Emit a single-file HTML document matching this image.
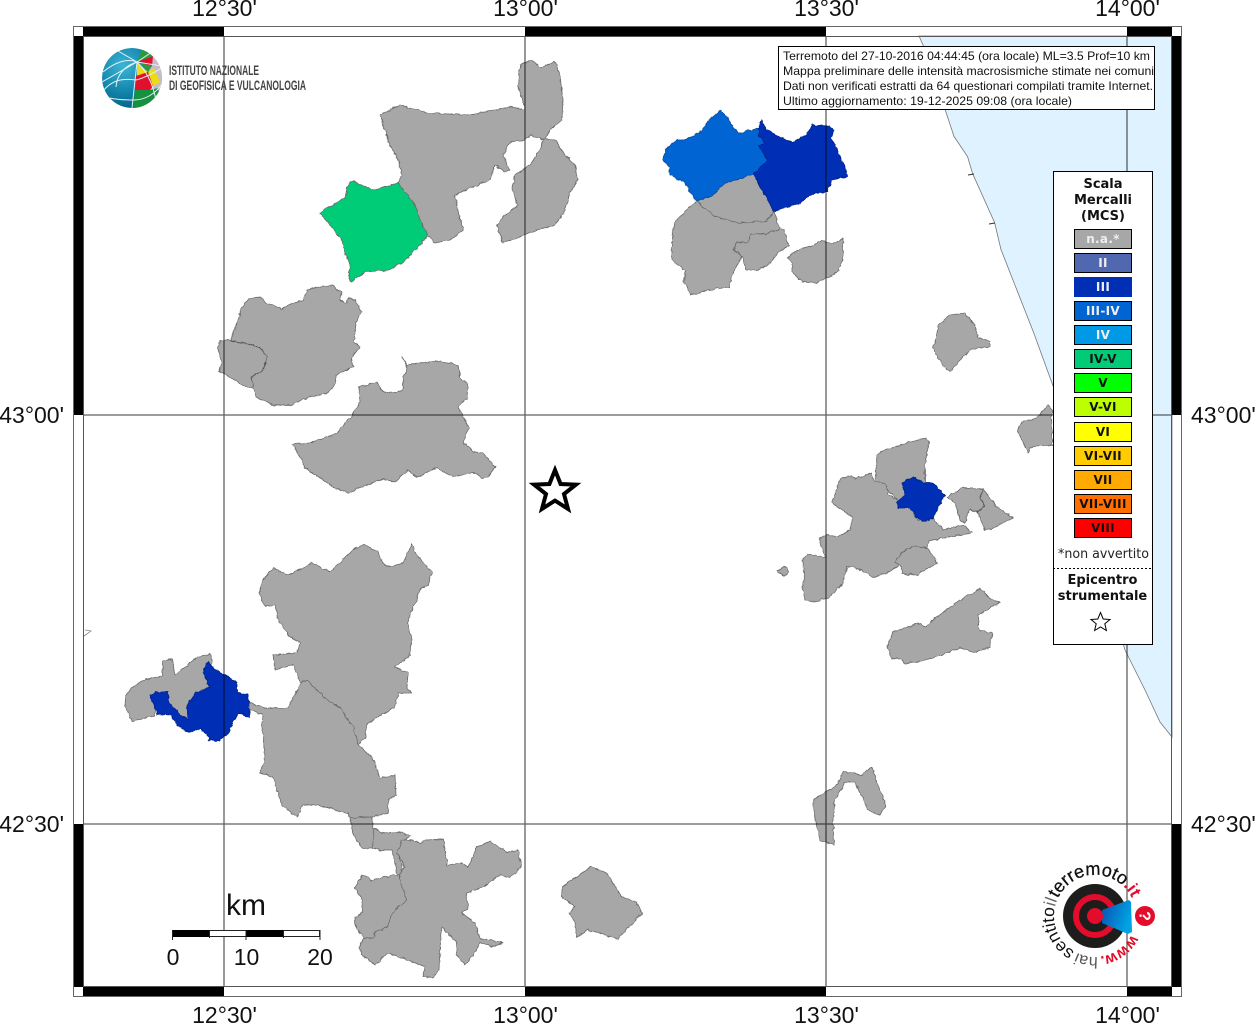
<!DOCTYPE html>
<html lang="it"><head><meta charset="utf-8"><title>Mappa intensità macrosismiche</title>
<style>html,body{margin:0;padding:0;background:#fff;width:1255px;height:1024px;overflow:hidden}svg{display:block}
text{font-family:"Liberation Sans",sans-serif}
.l{font-size:23px;fill:#111}
.c{text-anchor:middle}
.d{font-family:"DejaVu Sans",sans-serif;font-weight:bold;text-anchor:middle;font-size:13px;fill:#111}
.s{font-family:"DejaVu Sans",sans-serif;font-weight:bold;text-anchor:middle;font-size:12px;letter-spacing:.3px}
.i{font-size:12px;fill:#111}
.g polygon{fill:#a7a7a7;stroke:#6a6a6a;stroke-width:.8;stroke-linejoin:round}
.g polyline{fill:none;stroke:#555;stroke-width:1}
</style></head><body>
<svg width="1255" height="1024" viewBox="0 0 1255 1024" xmlns="http://www.w3.org/2000/svg">
<defs>
<radialGradient id="gb" cx=".35" cy=".3" r=".8"><stop offset="0" stop-color="#3db5d6"/><stop offset=".6" stop-color="#0f7fa6"/><stop offset="1" stop-color="#06597c"/></radialGradient>
<linearGradient id="cone" x1="0" y1="0" x2="1" y2=".4"><stop offset="0" stop-color="#0a4fb0"/><stop offset="1" stop-color="#00a4e4"/></linearGradient>
<clipPath id="gc"><circle cx="132" cy="78" r="30"/></clipPath>
<clipPath id="ib"><rect x="779" y="47" width="375" height="62"/></clipPath>
<path id="ring" d="M1131.5 934.6 A41 41 0 1 1 1135.4 908.9"/>
<filter id="wob" filterUnits="userSpaceOnUse" x="0" y="0" width="1255" height="1024" color-interpolation-filters="sRGB">
<feTurbulence type="fractalNoise" baseFrequency=".2" numOctaves="2" seed="4" result="n"/>
<feDisplacementMap in="SourceGraphic" in2="n" scale="3.5" xChannelSelector="R" yChannelSelector="G"/>
</filter>
</defs>
<rect width="1255" height="1024" fill="#fff"/>

<!-- sea -->
<polygon fill="#dff2ff" stroke="#777" stroke-width=".8" points="919,36 1172,36 1172,737 1160,722 1145,690 1125,650 1110,600 1095,540 1080,480 1060,405 1033.4,332 1001,249.6 994.6,222.6 972.6,173.6 967.6,156.7 954,136.4 945.6,111 932,65"/>
<polyline points="968,175 974,174" stroke="#333" stroke-width="1" fill="none"/>
<polyline points="989,224 995,223" stroke="#333" stroke-width="1" fill="none"/>
<polyline points="84,636 91,631 85,630" stroke="#888" stroke-width=".8" fill="none"/>

<g class="g" filter="url(#wob)">
<!-- top centre -->
<polygon points="380,115 400,105 430,113 470,115 495,110 510,107 525,110 518,85 520,65 532,60 540,68 555,62 560,75 563,100 562,120 550,130 545,140 530,135 525,140 510,142 503,155 510,170 505,172 495,165 490,180 465,190 455,195 460,220 463,230 450,240 435,243 428,235 420,220 415,205 398,183 402,175 398,160 390,145 385,130"/>
<polygon points="543,139 555,140 565,155 575,165 578,180 570,192 565,210 555,225 530,232 520,237 503,243 497,225 505,215 518,205 512,190 515,175 530,165 540,150"/>
<polygon style="fill:#00cc78" points="353,180 360,185 375,190 398,183 415,205 420,220 428,235 420,245 405,260 390,270 365,272 352,281 349,279 350,262 345,255 342,240 330,225 320,214 325,208 335,204 345,198 348,185"/>
<!-- upper left -->
<polygon points="231,340 242,307 249,298 260,297 267,303 282,309 292,303 303,300 307,290 325,286 333,285 341,292 340,300 347,303 348,298 355,300 361,312 356,323 354,342 360,347 352,357 353,367 336,375 336,383 328,393 307,398 290,405 273,405 257,398 253,388 251,387 245,387 227,375 219,371 222,362 218,348 220,341"/>
<polyline points="230,340 260,347 267,357 263,370 251,377 253,387"/>
<polygon points="292,444 310,443 337,433 352,415 360,402 359,387 377,382 382,391 393,393 402,390 403,377 408,368 402,357 407,365 437,361 458,365 460,377 468,385 467,398 458,407 469,428 463,443 475,452 483,453 495,467 488,477 482,478 473,472 453,477 437,468 417,477 408,470 395,482 383,479 348,493 335,488 305,468 300,457"/>
<!-- north-east group -->
<polygon points="696,201 712,196 724,184 753,174 774,211 767,221 738,223 714,216"/>
<polygon points="696,201 675,222 672,236 672,260 685,271 684,282 691,295 709,290 729,287 734,271 742,256 734,250 736,243 748,243 751,234 765,234 780,229 774,211 767,221 738,223 714,216"/>
<polygon points="734,250 736,243 748,243 751,234 765,234 780,229 784,229 789,246 780,251 768,265 758,270 746,270 742,256"/>
<polygon points="787,257 799,250 814,245 821,241 834,243 843,239 843,260 837,273 826,278 817,283 802,282 792,272 792,263"/>
<polygon style="fill:#0064d2;stroke:#0a4a9a" points="663,160 665,150 677,140 684,140 699,133 709,120 721,110 729,120 738,133 759,128 759,136 765,143 759,146 768,160 753,174 724,184 712,196 696,201 684,182 670,175 669,167"/>
<polygon style="fill:#002fb5;stroke:#00238a" points="761,120 767,130 778,136 792,142 807,135 812,125 829,126 834,131 831,138 836,147 841,160 844,163 847,177 840,178 832,180 827,192 812,194 799,204 787,207 774,211 753,174 768,160 759,146 765,143 759,136 759,128"/>
<polygon points="938,325 950,315 965,313 975,325 978,337 990,342 990,346 970,350 960,360 950,372 942,365 933,348 937,335"/>
<polygon points="1017,431 1022,422 1037,418 1048,405 1052,410 1052,445 1030,447 1028,453 1022,440"/>
<!-- east group -->
<polygon points="875,482 877,455 882,451 910,442 927,438 929,443 925,463 925,482 933,490 905,510 897,500 887,490 885,483"/>
<polygon points="847,476 855,479 872,473 873,480 885,483 888,495 897,500 898,508 910,507 918,520 933,518 943,530 963,525 972,533 947,537 928,541 927,548 912,547 902,552 897,567 887,573 873,577 855,567 847,566 843,583 828,598 813,602 805,600 802,588 805,577 802,560 808,554 825,558 819,538 828,535 838,537 850,530 852,517 832,503 840,480"/>
<polygon points="895,562 903,552 913,546 928,549 938,563 917,575 903,574 902,567"/>
<polygon points="947,497 962,488 983,489 997,507 1014,518 985,531 978,512 970,509 965,523 960,520 955,503"/>
<polyline points="983,489 980,498 984,505 978,512"/>
<polygon style="fill:#002fb5;stroke:#00238a" points="903,483 913,477 925,483 933,483 945,495 937,510 933,518 923,522 917,517 910,508 898,508 897,502 905,495"/>
<polygon points="777,571 785,567 789,572 784,576"/>
<polygon points="887,647 893,632 918,623 925,627 933,620 960,600 980,589 992,600 1000,602 978,615 979,630 992,633 990,648 973,652 960,648 933,658 917,662 905,664 898,657 892,660"/>
<polygon points="813,800 825,792 838,785 843,772 855,773 860,775 872,767 878,785 886,805 880,815 868,810 855,782 845,782 835,800 833,820 834,845 820,840 815,820"/>
<!-- west -->
<polygon points="126,693 142,681 153,678 163,675 163,661 172,659 175,675 197,657 210,654 212,662 205,672 210,687 195,693 187,705 188,720 180,715 168,700 168,692 155,692 150,695 155,707 155,715 132,722 125,705"/>
<polygon points="273,568 288,575 312,563 330,572 353,550 363,544 378,552 382,563 390,567 403,563 412,544 415,553 432,572 428,585 420,590 407,623 412,640 410,655 395,667 408,673 407,688 412,693 398,693 395,707 367,723 365,738 358,745 353,727 340,708 327,700 307,680 300,682 293,665 275,670 273,655 297,653 300,643 290,637 277,618 275,605 265,607 259,593 263,580"/>
<polygon points="302,681 307,680 327,700 340,708 353,727 358,745 373,758 380,778 395,775 396,795 388,800 388,813 372,817 360,817 352,822 348,813 317,805 303,805 297,817 282,805 273,777 260,773 265,757 262,727 263,715 250,710 250,703 265,708 288,708"/>
<polygon style="fill:#002fb5;stroke:#00238a" points="208,661 213,668 225,675 237,683 237,693 248,694 250,717 238,713 228,733 220,740 208,741 210,737 200,729 188,732 180,727 170,715 157,714 155,707 150,695 155,692 168,692 168,700 180,715 188,720 187,705 195,693 210,687 203,672"/>
<!-- south -->
<polygon points="350,818 372,817 374,830 376,842 372,848 362,848 353,835"/>
<polygon points="374,828 382,833 398,832 411,836 402,842 397,853 403,867 399,875 397,873 392,850 380,850 372,848"/>
<polygon points="402,840 412,840 420,843 426,840 443,839 447,860 447,865 462,863 468,867 477,847 490,841 507,852 518,850 521,867 510,878 500,875 483,887 467,893 468,908 462,913 475,923 480,938 503,943 493,947 480,942 473,955 465,965 457,955 457,943 442,927 440,950 439,970 432,978 423,977 425,967 408,960 388,953 375,965 362,955 359,947 364,938 373,938 375,932 387,927 393,912 407,900 402,888 399,875 405,867 397,853"/>
<polygon points="362,875 372,880 395,875 399,875 402,888 407,900 393,912 387,927 375,932 373,938 364,938 355,925 355,917 362,913 362,900 355,888"/>
<polygon points="562,887 591,867 607,873 622,897 637,902 642,913 618,939 600,933 588,930 577,937 575,923 569,913 575,907 562,897"/>
</g>

<!-- grid -->
<g stroke="#000" stroke-opacity=".62" stroke-width="1.3" fill="none">
<path d="M224 36V987M525 36V987M826 36V987M1127 36V987M83 415H1172M83 824H1172"/>
</g>

<!-- frame -->
<g fill="#000">
<rect x="83" y="26" width="141" height="10"/><rect x="525" y="26" width="301" height="10"/><rect x="1127" y="26" width="45" height="10"/>
<rect x="83" y="987" width="141" height="10"/><rect x="525" y="987" width="301" height="10"/><rect x="1127" y="987" width="45" height="10"/>
<rect x="73" y="36" width="10" height="379"/><rect x="73" y="824" width="10" height="163"/>
<rect x="1172" y="36" width="10" height="379"/><rect x="1172" y="824" width="10" height="163"/>
</g>
<rect x="73.5" y="26.5" width="1108" height="970" fill="none" stroke="#666" stroke-width="1"/>
<rect x="83.5" y="36.5" width="1088" height="950" fill="none" stroke="#555" stroke-width="1"/>

<!-- axis labels -->
<g>
<text class="l c" x="224.5" y="16">12°30'</text><text class="l c" x="525.5" y="16">13°00'</text><text class="l c" x="826.5" y="16">13°30'</text><text class="l c" x="1127.5" y="16">14°00'</text>
<text class="l c" x="224.5" y="1023">12°30'</text><text class="l c" x="525.5" y="1023">13°00'</text><text class="l c" x="826.5" y="1023">13°30'</text><text class="l c" x="1127.5" y="1023">14°00'</text>
</g>
<text class="l" x="64" y="423" text-anchor="end">43°00'</text><text class="l" x="64" y="832" text-anchor="end">42°30'</text>
<text class="l" x="1191" y="423">43°00'</text><text class="l" x="1191" y="832">42°30'</text>

<!-- INGV logo -->
<g clip-path="url(#gc)">
<circle cx="132" cy="78" r="30" fill="url(#gb)"/>
<polygon fill="#c9bcc9" points="148,48 165,60 165,100 150,100"/>
<polygon fill="#2c9a3c" points="137,62 142,50 150,50 153,56"/>
<polygon fill="#e2102c" points="137,62 153,56 152,66 148,65"/>
<polygon fill="#ecdc14" points="137,62 148,72 137,76"/>
<polygon fill="#2c9a3c" points="140,63 152,66 148,72"/>
<polygon fill="#ecdc14" points="148,72 154,68 160,82 153,86"/>
<polygon fill="#e2102c" points="136,76 148,72 153,86 150,90 135,90"/>
<polygon fill="#179040" points="135,90 150,90 158,88 160,96 153,104 133,110"/>
<g fill="none" stroke="#dff3f7" stroke-width="1">
<path d="M137 62 L132 108M137 62 L118 51M137 62 L102 82M137 62 C124 66 117 75 116 87M137 62C145 70 152 80 156 100M137 62 L155 50M137 62 L162 66"/>
<path d="M103 72 C115 62 128 58 137 62M103 91 C112 80 122 78 136 80C145 78 155 72 162 68M110 98 C118 100 128 100 134 100C145 100 155 94 162 84"/>
</g>
</g>
<g fill="#444">
<text x="169" y="75" textLength="90" lengthAdjust="spacingAndGlyphs" style="font-size:14px;font-weight:bold">ISTITUTO NAZIONALE</text>
<text x="169" y="90" textLength="137" lengthAdjust="spacingAndGlyphs" style="font-size:14px;font-weight:bold">DI GEOFISICA E VULCANOLOGIA</text>
</g>

<!-- info box -->
<rect x="778.5" y="46.5" width="376" height="63" fill="#fff" stroke="#000" stroke-width="1"/>
<g clip-path="url(#ib)">
<text class="i" x="783" y="60" textLength="367" lengthAdjust="spacingAndGlyphs">Terremoto del 27-10-2016 04:44:45 (ora locale) ML=3.5 Prof=10 km</text>
<text class="i" x="783" y="75" textLength="371" lengthAdjust="spacingAndGlyphs">Mappa preliminare delle intensità macrosismiche stimate nei comuni</text>
<text class="i" x="783" y="90" textLength="370" lengthAdjust="spacingAndGlyphs">Dati non verificati estratti da 64 questionari compilati tramite Internet.</text>
<text class="i" x="783" y="105" textLength="289" lengthAdjust="spacingAndGlyphs">Ultimo aggiornamento: 19-12-2025 09:08 (ora locale)</text>
</g>

<!-- legend -->
<rect x="1053.5" y="171.5" width="99" height="473" fill="#fff" stroke="#000" stroke-width="1"/>
<text class="d" x="1103" y="188">Scala</text>
<text class="d" x="1103" y="204">Mercalli</text>
<text class="d" x="1103" y="220">(MCS)</text>
<g stroke="#000" stroke-width="1">
<rect x="1074.5" y="229.5" width="57" height="19" fill="#a7a7a7"/>
<rect x="1074.5" y="253.5" width="57" height="19" fill="#5068b0"/>
<rect x="1074" y="277" width="58" height="20" fill="#002fb5" stroke="none"/>
<rect x="1074.5" y="301.5" width="57" height="19" fill="#0064d2"/>
<rect x="1074.5" y="325.5" width="57" height="19" fill="#0099e6"/>
<rect x="1074.5" y="349.5" width="57" height="19" fill="#00cc78"/>
<rect x="1074.5" y="373.5" width="57" height="19" fill="#00ff00"/>
<rect x="1074.5" y="397.5" width="57" height="19" fill="#bbff00"/>
<rect x="1074.5" y="422.5" width="57" height="19" fill="#ffff00"/>
<rect x="1074.5" y="446.5" width="57" height="19" fill="#ffcc00"/>
<rect x="1074.5" y="470.5" width="57" height="19" fill="#ffaa00"/>
<rect x="1074.5" y="494.5" width="57" height="19" fill="#ff7000"/>
<rect x="1074.5" y="518.5" width="57" height="19" fill="#ff0000"/>
</g>
<g>
<text class="s" x="1103" y="243" fill="#eee">n.a.*</text>
<text class="s" x="1103" y="267" fill="#eee">II</text>
<text class="s" x="1103" y="291" fill="#eee">III</text>
<text class="s" x="1103" y="315" fill="#eee">III-IV</text>
<text class="s" x="1103" y="339" fill="#eee">IV</text>
</g>
<g fill="#111">
<text class="s" x="1103" y="363">IV-V</text>
<text class="s" x="1103" y="387">V</text>
<text class="s" x="1103" y="411">V-VI</text>
<text class="s" x="1103" y="436">VI</text>
<text class="s" x="1103" y="460">VI-VII</text>
<text class="s" x="1103" y="484">VII</text>
<text class="s" x="1103" y="508">VII-VIII</text>
<text class="s" x="1103" y="532">VIII</text>
</g>
<text x="1058" y="558" textLength="91" lengthAdjust="spacingAndGlyphs" style="font-family:'DejaVu Sans',sans-serif;font-size:13px;fill:#222">*non avvertito</text>
<line x1="1053" y1="568.5" x2="1151" y2="568.5" stroke="#000" stroke-width="1" stroke-dasharray="2 2"/>
<text class="d" x="1102.5" y="584">Epicentro</text>
<text class="d" x="1102.5" y="600">strumentale</text>
<polygon points="1100.5,612.5 1103.2,619 1110,619.5 1104.8,623.8 1106.4,630.5 1100.5,627 1094.6,630.5 1096.2,623.8 1091,619.5 1097.8,619" fill="#fff" stroke="#000" stroke-width="1"/>

<!-- epicentre star -->
<polygon points="555,470 560.6,484 575.9,484.6 564,494 568,508.9 555,500.6 542,508.9 546,494 534.1,484.6 549.4,484" fill="#fff" stroke="#000" stroke-width="4" stroke-linejoin="miter"/>

<!-- scale -->
<text x="226" y="915" style="font-size:30px;fill:#111">km</text>
<rect x="172.5" y="930.5" width="147" height="6" fill="#fff" stroke="#222" stroke-width="1"/>
<rect x="172" y="930" width="38" height="7" fill="#000"/><rect x="246" y="930" width="37" height="7" fill="#000"/>
<path d="M172.5 930V940M209.5 930V938M246 930V940M283.5 930V938M320 930V940" stroke="#222" stroke-width="1"/>
<text class="l c" x="173" y="965">0</text><text class="l c" x="246.5" y="965">10</text><text class="l c" x="320" y="965">20</text>

<!-- haisentito logo -->
<circle cx="1095" cy="916" r="32" fill="#1d1d1b"/>
<circle cx="1095" cy="916" r="19" fill="none" stroke="#e30d2b" stroke-width="6"/>
<polygon points="1102,910 1129,900 1131,902 1132,932 1128,934 1102,923" fill="url(#cone)"/>
<circle cx="1095" cy="916" r="8" fill="#e30d2b"/>
<circle cx="1145" cy="916" r="10" fill="#e30d2b"/>
<text x="1145" y="921.5" text-anchor="middle" transform="rotate(90 1145 916)" style="font-size:16px;font-weight:bold;fill:#fff">?</text>
<g>
<text style="font-size:15.5px;font-weight:bold;fill:#e30d2b"><textPath href="#ring" startOffset="0">www.</textPath></text>
<text style="font-size:16px;fill:#555"><textPath href="#ring" startOffset="42">hai</textPath></text>
<text style="font-size:17.5px;fill:#111"><textPath href="#ring" startOffset="66">sentito</textPath></text>
<text style="font-size:17px;fill:#666"><textPath href="#ring" startOffset="118">il</textPath></text>
<text style="font-size:18px;fill:#111;stroke:#111;stroke-width:.3"><textPath href="#ring" startOffset="127">terremoto</textPath></text>
<text style="font-size:17px;font-weight:bold;fill:#e30d2b"><textPath href="#ring" startOffset="204">.it</textPath></text>
</g>
</svg>
</body></html>
